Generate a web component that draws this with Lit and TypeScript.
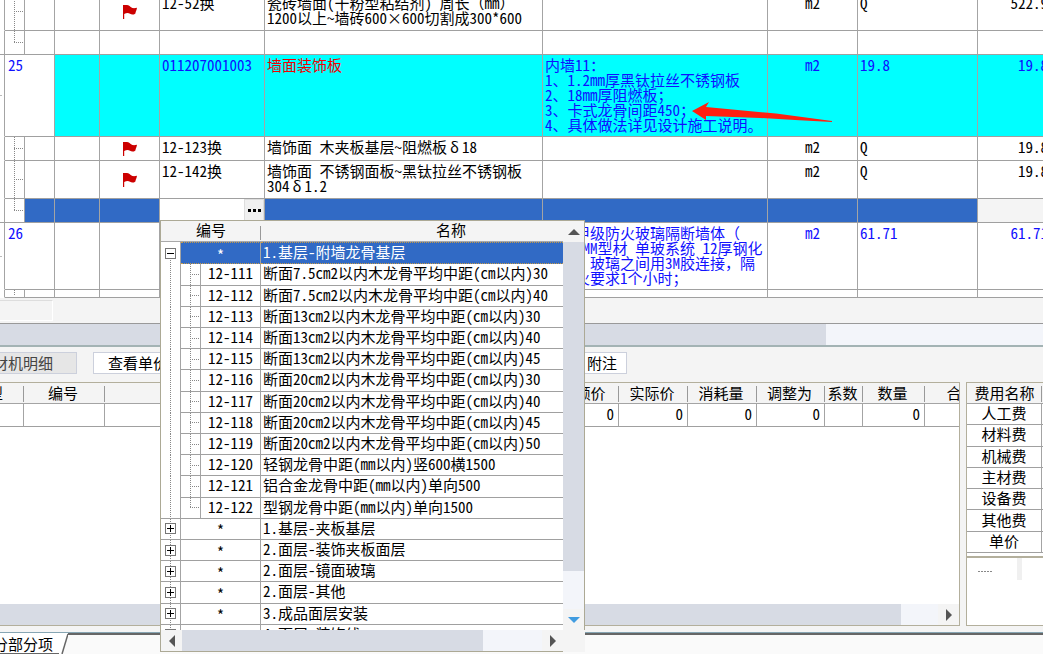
import { LitElement, html, css, svg, nothing } from "lit";
import { customElement } from "lit/decorators.js";
import { classMap } from "lit/directives/class-map.js";

type GridRow = {
  kind: "item" | "sub" | "edit" | "blank";
  size: string;
  last?: boolean;
  no?: string;
  flag?: boolean;
  hot?: boolean;
  code?: string;
  name?: string[];
  feature?: string[];
  unit?: string;
  expr?: string;
  qty?: string;
};

const GRID: GridRow[] = [
  {
    kind: "sub", size: "h38", flag: true, code: "12-52换",
    name: ["瓷砖墙面(干粉型粘结剂) 周长（mm）", "1200以上~墙砖600×600切割成300*600"],
    unit: "m2", expr: "Q", qty: "522.9",
  },
  { kind: "sub", size: "h24", last: true },
  {
    kind: "item", size: "h82", hot: true, no: "25", code: "011207001003", name: ["墙面装饰板"],
    feature: ["内墙11：", "1、1.2mm厚黑钛拉丝不锈钢板", "2、18mm厚阻燃板；", "3、卡式龙骨间距450；", "4、具体做法详见设计施工说明。"],
    unit: "m2", expr: "19.8", qty: "19.8",
  },
  { kind: "sub", size: "h24", flag: true, code: "12-123换", name: ["墙饰面 木夹板基层~阻燃板δ18"], unit: "m2", expr: "Q", qty: "19.8" },
  {
    kind: "sub", size: "h38", flag: true, code: "12-142换",
    name: ["墙饰面 不锈钢面板~黑钛拉丝不锈钢板", "304δ1.2"], unit: "m2", expr: "Q", qty: "19.8",
  },
  { kind: "edit", size: "h24", last: true },
  {
    kind: "item", size: "h67", no: "26",
    feature: ["采用甲级防火玻璃隔断墙体（", "80*50MM型材 单玻系统 12厚钢化", "防火，玻璃之间用3M胶连接，隔", "断耐火要求1个小时；"],
    unit: "m2", expr: "61.71", qty: "61.71",
  },
  { kind: "blank", size: "h8" },
];

const QUOTAS: [string, string][] = [
  ["12-111", "断面7.5cm2以内木龙骨平均中距(cm以内)30"],
  ["12-112", "断面7.5cm2以内木龙骨平均中距(cm以内)40"],
  ["12-113", "断面13cm2以内木龙骨平均中距(cm以内)30"],
  ["12-114", "断面13cm2以内木龙骨平均中距(cm以内)40"],
  ["12-115", "断面13cm2以内木龙骨平均中距(cm以内)45"],
  ["12-116", "断面20cm2以内木龙骨平均中距(cm以内)30"],
  ["12-117", "断面20cm2以内木龙骨平均中距(cm以内)40"],
  ["12-118", "断面20cm2以内木龙骨平均中距(cm以内)45"],
  ["12-119", "断面20cm2以内木龙骨平均中距(cm以内)50"],
  ["12-120", "轻钢龙骨中距(mm以内)竖600横1500"],
  ["12-121", "铝合金龙骨中距(mm以内)单向500"],
  ["12-122", "型钢龙骨中距(mm以内)单向1500"],
];

const GROUPS = ["1.基层-夹板基层", "2.面层-装饰夹板面层", "2.面层-镜面玻璃", "2.面层-其他", "3.成品面层安装", "4.面层-装饰线"];

const FEES = ["人工费", "材料费", "机械费", "主材费", "设备费", "其他费", "单价"];

const DETAIL: [string, string, string][] = [
  ["类型", "", "c69"], ["编号", "", "c81"], ["", "", "c445"],
  ["定额价", "0", "c69"], ["实际价", "0", "c69"], ["消耗量", "0", "c69"], ["调整为", "0", "c68"],
  ["系数", "", "c38"], ["数量", "0", "c62"], ["合价", "", "c76"],
];

const triangles: Record<string, string> = {
  up: "M0 9 L6 3 L12 9 Z",
  down: "M0 3 L12 3 L6 9 Z",
  left: "M9 0 L3 6 L9 12 Z",
  right: "M3 0 L9 6 L3 12 Z",
};

const arrowButton = (dir: string, label: string) => html`
  <button class="arrow ${dir}" aria-label=${label}>
    <svg width="12" height="12" viewBox="0 0 12 12"><path d=${triangles[dir]}></path></svg>
  </button>`;

// Latin text is set half width; full-width punctuation and Greek keep a whole cell.
const mixed = (lines: string[] = []) =>
  lines
    .join("\n")
    .split(/([（），；：]+|δ)/)
    .map((part, i) => (i % 2 === 0 ? part : part === "δ" ? html`<span class="greek">δ</span>` : html`<span class="full">${part}</span>`));

const base = css`
  * { box-sizing: border-box; }
  :host {
    font: 15px/15px "Noto Sans CJK SC", "Liberation Sans", sans-serif;
    font-feature-settings: "hwid";
    text-spacing-trim: space-all;
    color: #000;
  }
  button, input { font: inherit; font-feature-settings: inherit; color: inherit; margin: 0; padding: 0; border: 0; border-radius: 0; }
  table { border-collapse: separate; border-spacing: 0; table-layout: fixed; }
  td, th { padding: 0; font-weight: 400; white-space: pre; overflow: hidden; }
  .full { font-feature-settings: normal; }
  .greek { display: inline-block; width: 15px; text-align: center; }
  .arrow { flex: none; width: 21px; height: 21px; display: grid; place-items: center; background: #f4f4f4; }
  .arrow path { fill: #555; }
  .scroll { display: flex; background: #f3f5fa; }
  .thumb { background: #d7dbe4; }
`;

@customElement("bill-grid")
export class BillGrid extends LitElement {
  static styles = [base, css`
    :host { display: block; overflow: hidden; background: #fff; }
    table { width: 1051px; margin-top: -7px; }
    .edge { width: 5px; } .tree { width: 20px; } .mark { width: 30px; } .lock { width: 45px; }
    .flag { width: 60px; } .code { width: 105px; } .name { width: 278px; } .feature { width: 225px; }
    .unit { width: 90px; } .expr { width: 120px; } .qty { width: 73px; }
    td { border-right: 1px solid #a4a4a4; border-bottom: 1px solid #a0a0a0; padding: 2px 2px 0; vertical-align: top; }
    .h8 td { height: 8px; padding: 0; } .h24 td { height: 24px; } .h38 td { height: 38px; }
    .h67 td { height: 67px; } .h82 td { height: 82px; }
    td.e { border-bottom-color: #fff; }
    .closed td.e { border-bottom-color: #a0a0a0; }
    .item td.e { background: linear-gradient(#bbb, #bbb) 0 50% / 2px 1px no-repeat; }
    td.no { padding-left: 3px; }
    td.t {
      background:
        repeating-linear-gradient(#888 0 1px, transparent 1px 2px) 9px 0 / 1px 100% no-repeat,
        repeating-linear-gradient(90deg, #888 0 1px, transparent 1px 2px) 9px 50% / 10px 1px no-repeat; }
    .closed td.t {
      background:
        repeating-linear-gradient(#888 0 1px, transparent 1px 2px) 9px 0 / 1px 52% no-repeat,
        repeating-linear-gradient(90deg, #888 0 1px, transparent 1px 2px) 9px 52% / 10px 1px no-repeat; }
    .blank td.t { background: repeating-linear-gradient(#888 0 1px, transparent 1px 2px) 9px 0 / 1px 5px no-repeat; }
    .item { color: #1010ff; }
    .hot td:nth-child(n + 3) { background: #0ff; }
    .hot td:nth-child(5) { color: #f00000; }
    .edit td:nth-child(n + 3) { background: #316ac5; }
    .edit td.q { background: #f4f4f4; }
    .edit td.editor { background: #fff; padding: 0; }
    td.f { vertical-align: middle; text-align: center; padding: 0; }
    td.f svg { display: block; margin: 0 auto; }
    td.u { text-align: center; }
    td.q { text-align: right; }
    .field { display: flex; height: 23px; }
    .field input { flex: 1; min-width: 0; padding: 0 2px; outline: none; }
    .field button { width: 20px; background: #f0f0f0; border: 1px solid #ddd; display: grid; place-items: center; }
    .hot td.title { color: #f00000; }
    .hot td.plain { color: #1010ff; }
  `];

  row(r: GridRow) {
    const cls = { [r.kind]: true, [r.size]: true, hot: !!r.hot, closed: !!r.last };
    return html`<tr class=${classMap(cls)}>
      <td class="e"></td>
      ${r.kind === "item"
        ? html`<td class="no" colspan="2">${r.no}</td>`
        : html`<td class="t"></td><td></td>`}
      <td></td>
      <td class="f">${r.flag
        ? html`<svg width="14" height="14" viewBox="0 0 14 14" aria-label="换算"><path fill="#cc0000"
            d="M0 0H4C7 .3 7.500 2.500 9.500 3C11 3.300 12.500 3 14 2.800C13.800 5 12.600 6.500 12.400 8.400C10.500 10 8.500 9.800 7 8.800C5.500 7.800 3.500 7.800 1.200 9V14H0Z"></path></svg>`
        : nothing}</td>
      ${r.kind === "edit"
        ? html`<td class="editor"><div class="field"><input aria-label="编号" />
            <button aria-label="选择定额"><svg width="13" height="3" viewBox="0 0 13 3"><path d="M0 0h3v3h-3zM5 0h3v3h-3zM10 0h3v3h-3z"></path></svg></button></div></td>`
        : html`<td class="plain">${r.code}</td>`}
      <td class="title">${mixed(r.name)}</td>
      <td>${mixed(r.feature)}</td>
      <td class="u">${r.unit}</td>
      <td>${r.expr}</td>
      <td class="q">${r.qty}</td>
    </tr>`;
  }

  render() {
    const cols = ["edge", "tree", "mark", "lock", "flag", "code", "name", "feature", "unit", "expr", "qty"];
    return html`<table>
      <colgroup>${cols.map((c) => html`<col class=${c} />`)}</colgroup>
      <tbody>${GRID.map((r) => this.row(r))}</tbody>
    </table>`;
  }
}

@customElement("quota-picker")
export class QuotaPicker extends LitElement {
  static styles = [base, css`
    :host { display: grid; grid-template: 1fr 22px / 1fr 22px; background: #f4f4f4; }
    .view { overflow: hidden; background: #fff; border: solid #aca995; border-width: 1px 0 0 1px; height: 410px; }
    table { width: 480px; height: 425px; }
    .c20 { width: 20px; } .c60 { width: 60px; } .c380 { width: 380px; }
    th { height: 21px; background: #f4f4f4; border-bottom: 1px solid #a9a9a9; padding: 0 0 3px; }
    th.sep { background: linear-gradient(#999, #999) 100% 5px / 1px 14px no-repeat #f4f4f4; }
    td { border-right: 1px solid #a4a4a4; border-bottom: 1px solid #a0a0a0; padding: 0 0 3px; text-align: center; }
    td.n { text-align: left; padding-left: 2px; }
    td.star { padding: 2px 0 0; }
    td.g { padding: 0; border-bottom: 0; background: repeating-linear-gradient(#888 0 1px, transparent 1px 2px) 9px 0 / 1px 100% no-repeat; }
    td.g.first { background-position: 9px 16px; }
    td.g.end, .group td.g { border-bottom: 1px solid #a0a0a0; }
    td.b { background:
        repeating-linear-gradient(#888 0 1px, transparent 1px 2px) 9px 0 / 1px 100% no-repeat,
        repeating-linear-gradient(90deg, #888 0 1px, transparent 1px 2px) 9px 50% / 9px 1px no-repeat; }
    td.b.end { background:
        repeating-linear-gradient(#888 0 1px, transparent 1px 2px) 9px 0 / 1px 50% no-repeat,
        repeating-linear-gradient(90deg, #888 0 1px, transparent 1px 2px) 9px 50% / 9px 1px no-repeat; }
    .picked td:not(.g) { background: #316ac5; color: #fff; border-top: 1px dotted #c59a4a; border-bottom: 1px dotted #c59a4a; }
    .box { display: grid; place-items: center; width: 11px; height: 11px; margin: 0 auto; background: #fff; border: 1px solid #777; }
    .box svg { display: block; }
    .down path { fill: #419ce0; }
    .v { flex-direction: column; border: solid #aca995; border-width: 1px 1px 0 0; }
    .v .thumb { flex: 1; }
    .v .rest { height: 38px; }
    .h { border: solid #aca995; border-width: 0 0 1px 1px; }
    .h .thumb { flex: 1; }
    .h .rest { width: 59px; }
  `];

  box(open: boolean) {
    return html`<button class="box" aria-label=${open ? "折叠" : "展开"}>
      <svg width="7" height="7" viewBox="0 0 7 7"><path d="M0 3.5H7${open ? "" : "M3.5 0V7"}" stroke="#000"></path></svg>
    </button>`;
  }

  render() {
    return html`
      <div class="view"><table>
        <colgroup><col class="c20" /><col class="c20" /><col class="c60" /><col class="c380" /></colgroup>
        <thead><tr><th class="sep" colspan="3">编号</th><th>名称</th></tr></thead>
        <tbody>
          <tr class="picked"><td class="g first">${this.box(true)}</td><td class="star" colspan="2">*</td><td class="n">1.基层-附墙龙骨基层</td></tr>
          ${QUOTAS.map(([code, name], i) => {
            const end = i === QUOTAS.length - 1;
            return html`<tr>
              <td class=${classMap({ g: true, end })}></td>
              <td class=${classMap({ b: true, end })}></td>
              <td>${code}</td><td class="n">${name}</td></tr>`;
          })}
          ${GROUPS.map((name) => html`<tr class="group">
            <td class="g">${this.box(false)}</td><td class="star" colspan="2">*</td><td class="n">${name}</td></tr>`)}
        </tbody>
      </table></div>
      <div class="scroll v">${arrowButton("up", "向上")}<div class="thumb"></div><div class="rest"></div>${arrowButton("down", "向下")}</div>
      <div class="scroll h">${arrowButton("left", "向左")}<div class="thumb"></div><div class="rest"></div>${arrowButton("right", "向右")}</div>
    `;
  }
}

@customElement("app-root")
export class AppRoot extends LitElement {
  static styles = [base, css`
    :host { display: flex; flex-direction: column; position: relative; height: 100vh; overflow: hidden; background: #f4f4f4; }
    bill-grid { flex: none; }
    .foot { flex: none; height: 25px; padding: 2px 0; }
    .foot div { width: 53px; height: 21px; border: 1px solid #fff; border-top-color: #ddd; border-left: 0; }
    .hbar { flex: none; height: 24px; border-top: 1px solid #999; border-bottom: 2px solid #a3b3b4; }
    .hbar .thumb { flex: 0 0 826px; }
    .tools { flex: none; display: flex; height: 35px; padding: 5px 0 8px; }
    .tools button { flex: none; padding: 0 14px 2px; background: #fff; border: 1px solid #ccd0dc; white-space: nowrap; }
    .tools .on { background: #e6e6e6; color: #444; width: 123px; margin: 0 16px 0 -46px; padding: 0 23px 2px; }
    .tools .wide { width: 464px; margin-right: 14px; text-align: left; }
    .tools .note { width: 56px; padding: 0 8px 2px 14px; }
    .panels { flex: 1; min-height: 0; display: flex; gap: 6px; }
    .detail { flex: 1; min-width: 0; display: flex; flex-direction: column; overflow: hidden; background: #fff; border: 1px solid #b3af9c; border-left: 0; }
    .detail table { width: 1046px; margin-left: -45px; }
    .c81 { width: 81px; } .c445 { width: 445px; } .c69 { width: 69px; } .c68 { width: 68px; }
    .c38 { width: 38px; } .c62 { width: 62px; } .c76 { width: 76px; }
    th { height: 21px; padding: 0 3px 2px 0; border-bottom: 1px solid #a4a4a4; background: linear-gradient(#999, #999) 100% 3px / 1px 16px no-repeat #f4f4f4; }
    .detail td { height: 23px; padding: 0 4px 3px; text-align: right; border-right: 1px solid #a4a4a4; border-bottom: 1px solid #a0a0a0; }
    .detail .scroll { height: 21px; margin-top: auto; }
    .detail .thumb { flex: 1; }
    .detail .rest { width: 37px; }
    .side { flex: 0 0 77px; display: flex; flex-direction: column; overflow: hidden; background: #fff; border: 1px solid #b3af9c; border-right: 0; }
    .side table { flex: none; width: 100px; height: 170px; }
    .side th { padding-right: 0; }
    .fee { width: 75px; }
    .side td { padding-bottom: 3px; text-align: center; border-right: 1px solid #a4a4a4; border-bottom: 1px solid #a0a0a0; }
    .memo { flex: 1; display: flex; justify-content: space-between; margin-top: 3px; padding: 0 21px 0 11px; border-top: 2px solid #b3af9c; }
    .dots { width: 15px; height: 1px; margin-top: 13px; background: repeating-linear-gradient(90deg, #888 0 2px, transparent 2px 3px); }
    .stub { width: 5px; height: 22px; background: #f0f0f0; }
    .tabs { flex: none; display: flex; height: 22px; margin-top: 6px; border-top: 1px solid #86a5b3; background: #fafafa; }
    .tabs button { flex: none; height: 21px; width: 60px; margin-left: -1px; padding: 3px 0; text-indent: -6px; background: #fff; text-align: left; white-space: nowrap; border-bottom: 1px solid #666; }
    .tabs svg { flex: none; }
    .tabs i { flex: 1; border-top: 2px solid #666; }
    quota-picker { position: absolute; left: 160px; top: 220px; width: 425px; height: 432px; }
    .pointer { position: absolute; left: 692px; top: 101px; }
  `];

  render() {
    return html`
      <bill-grid></bill-grid>
      <div class="foot"><div></div></div>
      <div class="scroll hbar"><div class="thumb"></div></div>
      <div class="tools">
        <button class="on">人材机明细</button>
        <button class="wide">查看单价构成</button>
        <button class="note">附注</button>
      </div>
      <div class="panels">
        <section class="detail">
          <table>
            <colgroup>${DETAIL.map(([, , c]) => html`<col class=${c} />`)}</colgroup>
            <thead><tr>${DETAIL.map(([h]) => html`<th>${h}</th>`)}</tr></thead>
            <tbody><tr>${DETAIL.map(([, v]) => html`<td>${v}</td>`)}</tr></tbody>
          </table>
          <div class="scroll"><div class="thumb"></div><div class="rest"></div>${arrowButton("right", "向右")}</div>
        </section>
        <section class="side">
          <table>
            <colgroup><col class="fee" /><col /></colgroup>
            <thead><tr><th>费用名称</th><th></th></tr></thead>
            <tbody>${FEES.map((f) => html`<tr><td>${f}</td><td></td></tr>`)}</tbody>
          </table>
          <div class="memo"><div class="dots"></div><div class="stub"></div></div>
        </section>
      </div>
      <div class="tabs">
        <button>分部分项</button>
        <svg width="9" height="21" viewBox="0 0 9 21">${svg`<path d="M0 0H9L3 21H0Z" fill="#fff"></path><path d="M9 1L3 21" stroke="#666" stroke-width="1.500"></path>`}</svg>
        <i></i>
      </div>
      <quota-picker></quota-picker>
      <svg class="pointer" width="142" height="22" viewBox="0 0 142 22" aria-hidden="true">
        <path fill="#ff2010" d="M0 10L17 1L14 6L84 12.500L140 20V21L103 19L68 17L14 15L14 19Z"></path>
      </svg>
    `;
  }
}
